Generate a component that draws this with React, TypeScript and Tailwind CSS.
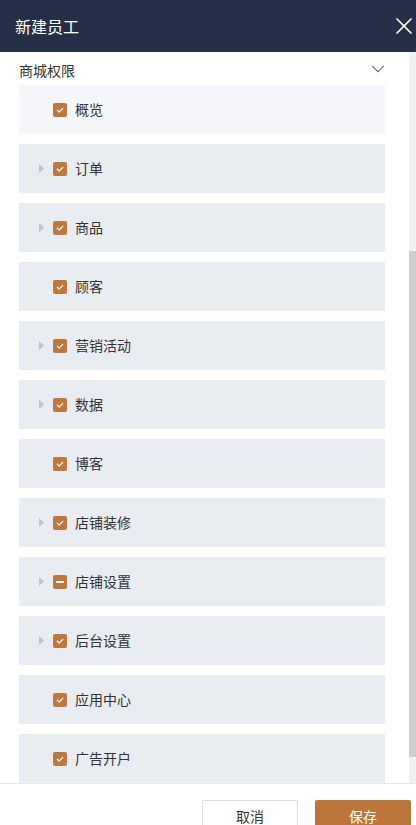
import { X, ChevronDown } from 'lucide-react';

type Perm = { name: string; caret: boolean; state: 'checked' | 'partial' };

const perms: Perm[] = [
  { name: '概览', caret: false, state: 'checked' },
  { name: '订单', caret: true, state: 'checked' },
  { name: '商品', caret: true, state: 'checked' },
  { name: '顾客', caret: false, state: 'checked' },
  { name: '营销活动', caret: true, state: 'checked' },
  { name: '数据', caret: true, state: 'checked' },
  { name: '博客', caret: false, state: 'checked' },
  { name: '店铺装修', caret: true, state: 'checked' },
  { name: '店铺设置', caret: true, state: 'partial' },
  { name: '后台设置', caret: true, state: 'checked' },
  { name: '应用中心', caret: false, state: 'checked' },
  { name: '广告开户', caret: false, state: 'checked' },
];

function Checkbox({ state }: { state: Perm['state'] }) {
  return (
    <span className="flex items-center justify-center w-[14px] h-[14px] rounded-[2px] bg-[#c0773d] shrink-0">
      {state === 'checked' ? (
        <svg width="10" height="10" viewBox="0 0 10 10" fill="none">
          <path d="M2.3 5.2 L4.2 7 L7.8 3.3" stroke="#fff" strokeWidth="1.2" strokeLinecap="round" strokeLinejoin="round" />
        </svg>
      ) : (
        <span className="block w-[8px] h-[2px] bg-white" />
      )}
    </span>
  );
}

function PermRow({ p, first }: { p: Perm; first: boolean }) {
  return (
    <div className={`flex items-center h-[49px] pl-[20px] ${first ? 'bg-[#f5f6fa]' : 'bg-[#e9ecf1]'}`}>
      <span className="w-[14px] flex items-center">
        {p.caret && (
          <svg width="6" height="9" viewBox="0 0 6 9">
            <path d="M0 0 L5 4.5 L0 9 Z" fill="#c0c4cc" />
          </svg>
        )}
      </span>
      <Checkbox state={p.state} />
      <span className="ml-[8px] text-[14px] text-[#333]">{p.name}</span>
    </div>
  );
}

export default function App() {
  return (
    <div
      className="w-[416px] h-[825px] flex flex-col bg-white overflow-hidden"
      style={{ fontFamily: '"Noto Sans CJK SC", "Noto Sans", sans-serif' }}
    >
      {/* Header */}
      <div className="h-[52px] shrink-0 flex items-center justify-between bg-[#252f48] pl-[15px]">
        <span className="text-[16px] text-white">新建员工</span>
        <X className="w-[28px] h-[28px] text-white mr-[-2px]" strokeWidth={1.5} />
      </div>

      {/* Body */}
      <div className="h-[731px] shrink-0 flex">
        <div className="flex-1 overflow-hidden pl-[19px] pr-[24px]">
          <div className="flex items-center justify-between h-[33px] pt-[3px]">
            <span className="text-[14px] text-[#333]">商城权限</span>
            <ChevronDown className="w-[22px] h-[22px] text-[#444] mr-[-4px] mt-[-2px]" strokeWidth={1.1} />
          </div>
          <div className="flex flex-col gap-[10px]">
            {perms.map((p, i) => (
              <PermRow key={p.name} p={p} first={i === 0} />
            ))}
          </div>
        </div>
        {/* scrollbar */}
        <div className="w-[7px] flex flex-col bg-[#f1f1f1]">
          <div className="h-[199px] shrink-0" />
          <div className="h-[506px] bg-[#cdcdcd]" />
        </div>
      </div>

      {/* Footer */}
      <div className="flex-1 border-t border-[#e8e8e8] flex justify-end gap-[17px] pt-[16px] pr-[5px]">
        <button className="w-[96px] h-[32px] rounded-[2px] border border-[#dcdfe6] bg-white text-[14px] text-[#333]">
          取消
        </button>
        <button className="w-[96px] h-[32px] rounded-[2px] bg-[#bd763a] text-[14px] text-white">
          保存
        </button>
      </div>
    </div>
  );
}
